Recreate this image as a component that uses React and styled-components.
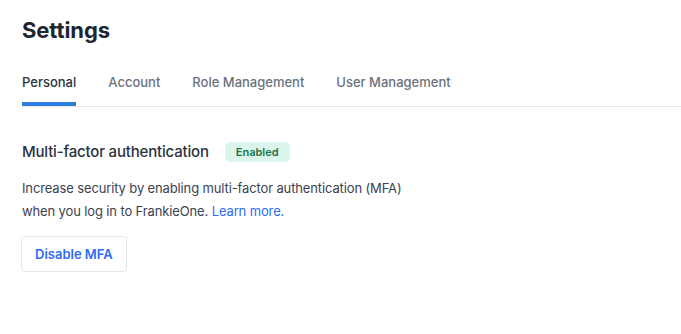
import React from "react";
import styled, { createGlobalStyle } from "styled-components";

const Global = createGlobalStyle`
  html, body { margin: 0; padding: 0; background: #ffffff; }
  body { font-family: Inter, "Noto Sans", Arial, sans-serif; -webkit-font-smoothing: antialiased; }
`;

const Page = styled.div`
  padding: 14px 0 0 22px;
`;

const Title = styled.h1`
  margin: 0;
  font-size: 22px;
  line-height: 32px;
  font-weight: 700;
  color: #1e2632;
  letter-spacing: -0.1px;
`;

const TabBar = styled.div`
  display: flex;
  gap: 32px;
  margin-top: 22px;
  border-bottom: 1px solid #e6e8eb;
`;

const Tab = styled.div`
  font-size: 13px;
  line-height: 18px;
  padding: 5px 0 15px;
  font-weight: 500;
  color: ${(p) => (p.$active ? "#2a3240" : "#6b7280")};
  box-shadow: ${(p) => (p.$active ? "inset 0 -4px 0 #2d7ee0" : "none")};
`;

const Section = styled.div`
  padding-top: 34px;
`;

const HeadRow = styled.div`
  display: flex;
  align-items: center;
  gap: 16px;
`;

const Heading = styled.h2`
  margin: 0;
  font-size: 15px;
  line-height: 22px;
  font-weight: 500;
  color: #2a3240;
  letter-spacing: -0.18px;
`;

const Badge = styled.span`
  display: inline-flex;
  align-items: center;
  height: 20px;
  padding: 0 11px;
  border-radius: 5px;
  background: #dcf5ea;
  color: #17764a;
  font-size: 11px;
  font-weight: 600;
`;

const Text = styled.p`
  margin: 14px 0 0;
  font-size: 13px;
  line-height: 23px;
  color: #3b4250;
  letter-spacing: -0.13px;
`;

const Link = styled.a`
  color: #2f6cf5;
  text-decoration: none;
`;

const Button = styled.button`
  margin-top: 13px;
  height: 36px;
  padding: 0 13px;
  border: 1px solid #e3e5e8;
  border-radius: 4px;
  background: #fff;
  color: #2f6cf5;
  font-family: inherit;
  font-size: 13px;
  font-weight: 600;
  cursor: pointer;
  margin-left: -1px;
`;

export default function App() {
  return (
    <>
      <Global />
      <Page>
        <Title>Settings</Title>
        <TabBar>
          <Tab $active>Personal</Tab>
          <Tab>Account</Tab>
          <Tab>Role Management</Tab>
          <Tab>User Management</Tab>
        </TabBar>
        <Section>
          <HeadRow>
            <Heading>Multi-factor authentication</Heading>
            <Badge>Enabled</Badge>
          </HeadRow>
          <Text>
            Increase security by enabling multi-factor authentication (MFA)
            <br />
            when you log in to FrankieOne. <Link href="#">Learn more.</Link>
          </Text>
          <Button>Disable MFA</Button>
        </Section>
      </Page>
    </>
  );
}
